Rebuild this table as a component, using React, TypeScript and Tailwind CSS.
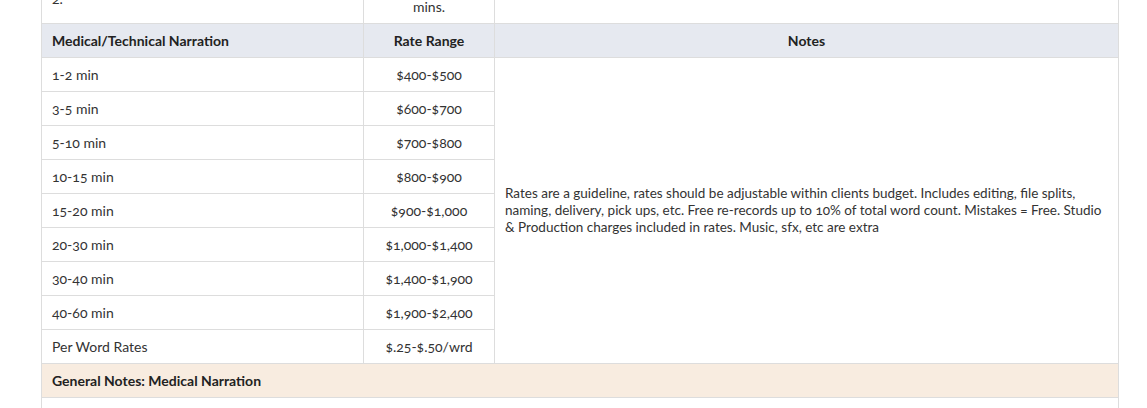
const ROWS = [
  { length: '1-2 min', rate: '$400-$500' },
  { length: '3-5 min', rate: '$600-$700' },
  { length: '5-10 min', rate: '$700-$800' },
  { length: '10-15 min', rate: '$800-$900' },
  { length: '15-20 min', rate: '$900-$1,000' },
  { length: '20-30 min', rate: '$1,000-$1,400' },
  { length: '30-40 min', rate: '$1,400-$1,900' },
  { length: '40-60 min', rate: '$1,900-$2,400' },
  { length: 'Per Word Rates', rate: '$.25-$.50/wrd' },
]

// wrapped by hand so the lines break where the original page breaks them
const NOTES = [
  'Rates are a guideline, rates should be adjustable within clients budget. Includes editing, file splits,',
  'naming, delivery, pick ups, etc. Free re-records up to 10% of total word count. Mistakes = Free. Studio',
  '& Production charges included in rates. Music, sfx, etc are extra',
]

const cell = 'border border-[#dddddd] px-[10px] py-2 leading-[17px]'

export default function App() {
  return (
    <div className="h-[408px] w-[1147px] overflow-hidden bg-white font-['Lato',sans-serif] text-[14px] text-[#333333] [font-feature-settings:'onum']">
      <div className="pl-[41px] pr-[28px] -mt-[28px]">
        <table className="w-[1078px] table-fixed border-collapse">
          <colgroup>
            <col className="w-[322px]" />
            <col className="w-[131px]" />
            <col />
          </colgroup>
          <tbody>
            <tr>
              <td className={cell}>2.</td>
              <td className={`${cell} text-center`}>
                {'\u00a0'}
                <br />
                mins.
              </td>
              <td className={cell}></td>
            </tr>
            <tr className="bg-[#e6e9f0] font-bold text-[#222222]">
              <td className={cell}>Medical/Technical Narration</td>
              <td className={`${cell} text-center`}>Rate Range</td>
              <td className={`${cell} text-center`}>Notes</td>
            </tr>
            {ROWS.map((row, i) => (
              <tr key={row.length}>
                <td className={cell}>{row.length}</td>
                <td className={`${cell} text-center`}>{row.rate}</td>
                {i === 0 && (
                  <td rowSpan={ROWS.length} className={`${cell} px-3 align-middle whitespace-nowrap text-[13.5px]`}>
                    {NOTES.map((line) => (
                      <span key={line} className="block">
                        {line}
                      </span>
                    ))}
                  </td>
                )}
              </tr>
            ))}
            <tr className="bg-[#f8ece0] font-bold text-[#222222]">
              <td colSpan={3} className={cell}>
                General Notes: Medical Narration
              </td>
            </tr>
            <tr>
              <td colSpan={3} className={`${cell} h-[34px]`}></td>
            </tr>
          </tbody>
        </table>
      </div>
    </div>
  )
}
